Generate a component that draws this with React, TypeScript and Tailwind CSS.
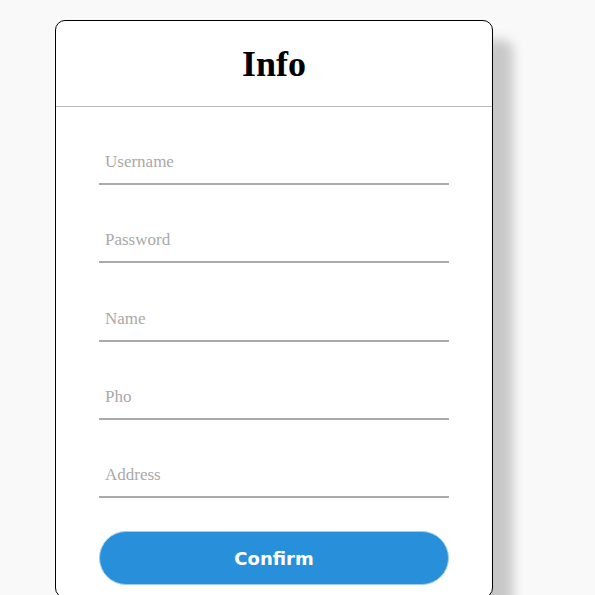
import React from "react";

const fields = ["Username", "Password", "Name", "Pho", "Address"];

const App: React.FC = () => {
  return (
    <div className="min-h-screen bg-[#f9f9f9] pt-5 pl-[55px] overflow-hidden">
      <div className="w-[438px] h-[578px] bg-white border border-black rounded-[10px] shadow-[20px_20px_12px_rgba(0,0,0,0.2)]">
        <div className="h-[86px] flex items-center justify-center border-b border-[#bbbbbb]">
          <h1 className="text-[36px] font-bold text-black leading-none font-['Liberation_Serif',serif]">
            Info
          </h1>
        </div>
        <form className="px-[43px] pt-[34px] flex flex-col gap-[34.3px]">
          {fields.map((f) => (
            <input
              key={f}
              type="text"
              placeholder={f}
              className="w-[350px] h-[44px] border-b-2 border-[#aaaaaa] px-[6px] text-[17px] outline-none placeholder:text-[#a9a9a9] font-['Liberation_Serif',serif]"
            />
          ))}
          <button
            type="button"
            className="-mt-[1px] w-[350px] h-[54px] rounded-full bg-[#2890da] border border-[#9fcdef] text-white text-[18px] font-bold font-['DejaVu_Sans',sans-serif]"
          >
            Confirm
          </button>
        </form>
      </div>
    </div>
  );
};

export default App;
